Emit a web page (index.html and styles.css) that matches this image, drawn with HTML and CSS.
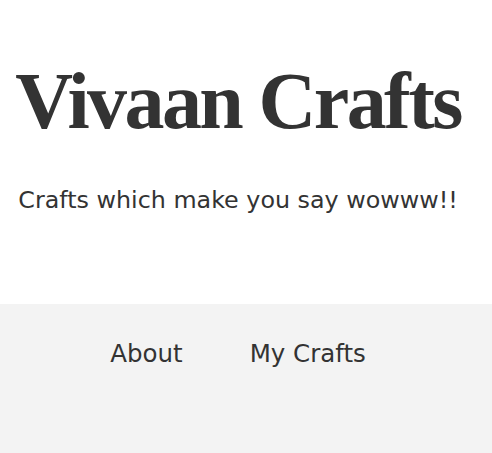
FILE: index.html
```html
<!DOCTYPE html>
<html lang="en">
<head>
    <meta charset="UTF-8">
    <meta name="viewport" content="width=device-width, initial-scale=1.0">
    <title>Vivaan Crafts</title>
    <link rel="stylesheet" href="styles.css">
</head>
<body>
    <header class="header">
        <div class="container">
            <h1 class="title">Vivaan Crafts</h1>
            <p class="tagline">Crafts which make you say wowww!!</p>
        </div>
    </header>

    <nav class="nav">
        <div class="container nav-links">
            <a href="#about" class="nav-link">About</a>
            <a href="#crafts" class="nav-link">My Crafts</a>
        </div>
    </nav>
</body>
</html>
```

FILE: styles.css
```css
* {
    margin: 0;
    padding: 0;
    box-sizing: border-box;
}

body {
    font-family: 'DejaVu Sans', sans-serif;
    color: #333;
    background: #fff;
    min-height: 100vh;
    display: flex;
    flex-direction: column;
}

.container {
    width: 476px;
}

.header {
    text-align: center;
    padding-top: 61px;
    height: 304px;
}

.title {
    font-family: 'Liberation Serif', serif;
    font-weight: bold;
    font-size: 80px;
    letter-spacing: -2.6px;
    line-height: 1;
}

.tagline {
    font-size: 23.8px;
    margin-top: 45px;
}

.nav {
    flex: 1;
    background: #f3f3f3;
}

.nav-links {
    display: flex;
    justify-content: center;
    gap: 67px;
    padding-top: 35px;
}

.nav-link {
    color: #333;
    text-decoration: none;
    font-size: 24.5px;
}
```
